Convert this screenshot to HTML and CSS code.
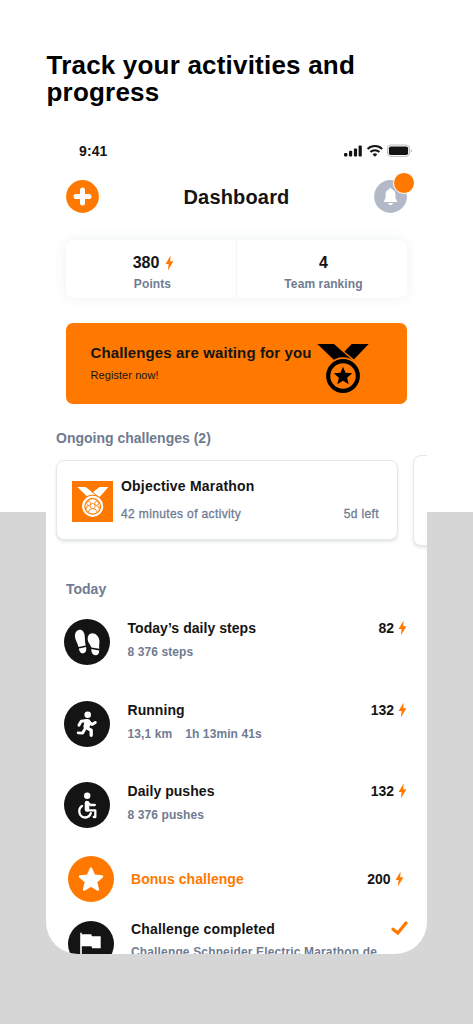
FILE: index.html
```html
<!DOCTYPE html>
<html lang="en">
<head>
<meta charset="utf-8">
<title>Dashboard</title>
<link rel="stylesheet" href="styles.css">
</head>
<body>
<svg class="defs" width="0" height="0">
  <symbol id="bolt" viewBox="0 0 9 16"><path d="M5.6 .5 .6 9.100h3L2.900 15.500 8.400 6.300H5.200z"/></symbol>
</svg>
<main class="phone">
  <h1 class="headline">Track your activities and progress</h1>
  <div class="status">
    <span class="time">9:41</span>
    <svg class="signals" width="70" height="14" viewBox="0 0 70 14">
      <g fill="#141414"><rect x="1" y="9" width="3.4" height="3.4" rx="1.2"/><rect x="6" y="6.8" width="3.2" height="5.6" rx="1"/><rect x="10.900" y="4.400" width="3.200" height="8" rx="1"/><rect x="15.600" y="1.600" width="3.200" height="10.800" rx="1"/></g>
      <g fill="none" stroke="#141414" stroke-width="2"><path d="M24.600 5a10.400 10.400 0 0 1 14.600 0M27.400 8a6.400 6.400 0 0 1 9 0"/></g>
      <path d="M31.900 12.800 29.600 10.400a3.300 3.300 0 0 1 4.600 0z" fill="#141414"/>
      <rect x="44.500" y="1" width="22" height="11.400" rx="3.200" fill="none" stroke="#bcbcbc"/>
      <rect x="45.900" y="2.400" width="19.200" height="8.600" rx="1.800" fill="#141414"/>
      <path d="M67.800 5v3.600q1.400-.5 1.400-1.800t-1.400-1.800" fill="#bcbcbc"/>
    </svg>
  </div>
  <header class="top">
    <svg width="33" height="33" viewBox="0 0 33 33"><circle cx="16.500" cy="16.500" r="16.400" fill="#ff7900"/><path d="M16.500 10v13M10 16.500h13" stroke="#fff" stroke-width="5" stroke-linecap="round"/></svg>
    <h2>Dashboard</h2>
    <div class="bell">
      <svg width="33" height="33" viewBox="0 0 33 33"><circle cx="16.500" cy="16.500" r="16.400" fill="#b2b9c8"/><path d="M16.500 8c.8 0 1.200.6 1.200 1.300 2.400.6 3.700 2.500 3.700 5v3.700l1.600 3v1H10v-1l1.600-3v-3.700c0-2.500 1.300-4.400 3.700-5 0-.7.4-1.300 1.200-1.300zM14 23h5c-.4 1.400-1.300 2-2.500 2s-2.100-.6-2.500-2z" fill="#fff"/></svg>
      <span class="dot"></span>
    </div>
  </header>
  <section class="stats">
    <div class="stat"><strong>380<svg class="bolt" width="9" height="16"><use href="#bolt"/></svg></strong><span>Points</span></div>
    <div class="stat"><strong>4</strong><span>Team ranking</span></div>
  </section>
  <section class="banner">
    <div class="banner-text"><strong>Challenges are waiting for you</strong><span>Register now!</span></div>
    <svg width="52" height="50" viewBox="0 0 156 150">
      <path d="M1 3h50l55 49H52z"/><path d="M104 3h51l-45 47-29-23z"/><path d="M80 25l32 27" stroke="#ff7900" stroke-width="3"/>
      <circle cx="78" cy="99" r="56" fill="#ff7900"/><circle cx="78" cy="99" r="44.500" fill="none" stroke="#000" stroke-width="12.500"/>
      <path d="M78 71l7.600 18.500 20 1.500-15.200 13 4.700 19.500L78 113l-17.100 10.500L65.600 104 50.400 91l20-1.500z"/>
    </svg>
  </section>
  <h3 class="section-title ongoing">Ongoing challenges (2)</h3>
  <section class="carousel">
    <article class="card">
      <svg width="41" height="41" viewBox="0 0 123 123">
        <path d="M0 0h123v123H0z" fill="#ff7900"/>
        <path d="M16 18h25l38 30H47z" fill="#fff"/><path d="M83 18h26L81 50 62 34z" fill="#fff"/><path d="M57 30l27 22" stroke="#ff7900" stroke-width="3"/>
        <circle cx="62" cy="76" r="35" fill="#ff7900"/><circle cx="62" cy="76" r="28.500" fill="none" stroke="#fff" stroke-width="6.500"/>
        <circle cx="62" cy="76" r="21.500" fill="#fff"/>
        <g fill="#fff" stroke="#ff7900" stroke-width="2.500"><circle cx="50" cy="67" r="6"/><circle cx="74" cy="67" r="6"/><path d="M42 86q0-12 9-12M82 86q0-12-9-12"/><circle cx="62" cy="75" r="7.500"/><path d="M49 93q1-10 13-10t13 10"/></g>
      </svg>
      <div class="card-text"><strong>Objective Marathon</strong><div class="meta"><span>42 minutes of activity</span><span>5d left</span></div></div>
    </article>
    <article class="card next"></article>
  </section>
  <h3 class="section-title today">Today</h3>
  <ul class="feed">
    <li class="row">
      <svg class="icon" width="46" height="46" viewBox="0 0 46 46"><circle cx="23" cy="23" r="23" fill="#141414"/><g fill="#fff"><path d="M15.300 10.800c3-.6 5 2.300 5.400 6 .3 3.300.2 6.500 1 9.600l-7.200 1.600c-.6-3.700-3.400-6.600-3.600-11-.1-3.300 1.700-5.700 4.400-6.200zM14.900 29.500l7.200-1.500c.6 3.400-.2 5.800-2.600 6.300-2.700.5-4.200-1.500-4.600-4.800z"/><path d="M28.200 14.200c-2.900 0-4.700 2.800-4.500 6.200.2 3 2.700 5.300 3.700 8l7.900 1.400c-.6-3 .4-5.300.1-8.400-.3-3.900-3.500-7.200-7.200-7.200zM27.300 30l7.900 1.500c.2 3.100-1.600 5.200-4.200 4.800-2.500-.4-3.900-2.900-3.700-6.300z"/></g></svg>
      <div class="row-text"><strong>Today’s daily steps</strong><span>8 376 steps</span></div>
      <b class="score">82<svg class="bolt" width="9" height="16"><use href="#bolt"/></svg></b>
    </li>
    <li class="row">
      <svg class="icon" width="46" height="46" viewBox="0 0 46 46"><circle cx="23" cy="23" r="23" fill="#141414"/><circle cx="23.700" cy="13.700" r="3.300" fill="#fff"/><path d="M20.500 18.500h5l2 3.500-3 6-5-2z" fill="#fff"/><g fill="none" stroke="#fff" stroke-width="2.900" stroke-linecap="round" stroke-linejoin="round"><path d="M14.900 24.300l2.300-4 6.300-.8 4.500 4 3.300-2"/><path d="M23.500 20.500l-2.300 5.500 6 3.300v5" stroke-width="3.300"/><path d="M20.600 28.500l-2 3.600-4.400-.2"/></g></svg>
      <div class="row-text"><strong>Running</strong><span class="pair"><span>13,1 km</span><span>1h 13min 41s</span></span></div>
      <b class="score">132<svg class="bolt" width="9" height="16"><use href="#bolt"/></svg></b>
    </li>
    <li class="row">
      <svg class="icon" width="46" height="46" viewBox="0 0 46 46"><circle cx="23" cy="23" r="23" fill="#141414"/><circle cx="23.200" cy="13.700" r="3.200" fill="#fff"/><g fill="none" stroke="#fff" stroke-width="2.300" stroke-linecap="round" stroke-linejoin="round"><path d="M23 21v6.500" stroke-width="4.600"/><path d="M24 21l2.500 2h4.300M23 28.300h8.300V35h-1.500M18 24a6.400 6.400 0 0 0 2 11.400c3.300.4 5.900-1.300 6.800-4.200"/></g></svg>
      <div class="row-text"><strong>Daily pushes</strong><span>8 376 pushes</span></div>
      <b class="score">132<svg class="bolt" width="9" height="16"><use href="#bolt"/></svg></b>
    </li>
    <li class="row bonus">
      <svg class="icon" width="46" height="46" viewBox="0 0 46 46"><circle cx="23" cy="23" r="23" fill="#ff7900"/><path d="M23 12.500l3.200 7.300 7.800.7-6 5.300 1.900 7.800-6.900-4.100-6.900 4.100 1.900-7.800-6-5.300 7.800-.7z" fill="#fff" stroke="#fff" stroke-width="2.400" stroke-linejoin="round"/></svg>
      <div class="row-text"><strong>Bonus challenge</strong></div>
      <b class="score">200<svg class="bolt" width="9" height="16"><use href="#bolt"/></svg></b>
    </li>
    <li class="row done">
      <svg class="icon" width="46" height="46" viewBox="0 0 46 46"><circle cx="23" cy="23" r="23" fill="#141414"/><path d="M12.200 12.500q0-.9.800-.9t.8.900v.8h9.400l.8 2h8.700V27.200h-8.500l-.8-2h-9.600V38h-1.600z" fill="#fff"/></svg>
      <div class="row-text"><strong>Challenge completed</strong><span>Challenge Schneider Electric Marathon de</span></div>
      <svg class="check" width="17" height="15" viewBox="0 0 17 15"><path d="M2 8.300l4.800 3.700L15 2" fill="none" stroke="#ff7900" stroke-width="3.200" stroke-linecap="round"/></svg>
    </li>
  </ul>
</main>
</body>
</html>
```
FILE: styles.css
```css
* { box-sizing: border-box; margin: 0; padding: 0; }
body {
  width: 473px; height: 1024px; overflow: hidden;
  background: linear-gradient(#fff 512px, #d6d6d6 512px);
  font-family: "Liberation Sans", Arial, sans-serif; color: #141414;
}
svg { display: block; flex: none; }
.defs { position: absolute; }
.phone {
  width: 381px; height: 954px; margin-left: 46px; padding-top: 52px;
  background: #fff; border-radius: 0 0 32px 32px; overflow: hidden;
}
.headline { height: 54px; padding-left: .5px; font-size: 26px; line-height: 27px; letter-spacing: .2px; color: #000; }
.status { display: flex; justify-content: space-between; align-items: center; height: 20px; margin: 35px 14px 0 33px; }
.time { font-size: 14px; font-weight: bold; letter-spacing: .1px; }
.top { display: flex; justify-content: space-between; align-items: center; height: 33px; margin: 19px 20px 0; }
.top h2 { font-size: 20px; line-height: 24px; letter-spacing: .17px; }
.bell { position: relative; }
.dot { position: absolute; top: -8.500px; right: -8px; width: 22px; height: 22px; border: 1.500px solid #fff; border-radius: 50%; background: #ff7900; }
.stats { display: flex; height: 58px; margin: 27px 20px 0; border-radius: 8px; background: #fff; box-shadow: 0 0 14px rgba(60, 95, 110, .09); }
.stat { flex: 1; display: flex; flex-direction: column; align-items: center; padding: 14px 0 0 3px; }
.stat + .stat { border-left: 1px solid #f4f6f7; }
.stat strong { display: flex; align-items: center; gap: 6px; font-size: 16px; line-height: 18px; }
.stat:first-child strong { padding-left: 2px; }
.stat span { margin-top: 5px; font-size: 12px; line-height: 14px; font-weight: bold; letter-spacing: .1px; color: #6f7b91; }
.bolt { fill: #ff7900; }
.banner { display: flex; height: 81px; margin: 25px 20px 0; padding: 20px 0 0 24.500px; border-radius: 7px; background: #ff7900; }
.banner-text { width: 226.500px; white-space: nowrap; }
.banner strong { display: block; font-size: 15px; line-height: 20px; letter-spacing: .12px; }
.banner span { display: block; margin-top: 4px; font-size: 11px; line-height: 16px; letter-spacing: .07px; }
.section-title { font-size: 14px; line-height: 18px; color: #6f7b91; }
.ongoing { margin: 25px 0 0 10px; }
.carousel { display: flex; align-items: center; gap: 15px; height: 90px; margin: 8px 0 0 10px; }
.card { flex: none; display: flex; gap: 8px; width: 342px; height: 80px; padding: 20px 18px 0 15px; border: 1px solid #e3e8eb; border-radius: 8px; background: #fff; box-shadow: 0 2px 3px rgba(50, 60, 70, .13); }
.next { height: 91px; }
.card-text { flex: 1; margin-top: -4px; }
.card-text strong { display: block; font-size: 14px; line-height: 18px; letter-spacing: .2px; }
.meta { display: flex; justify-content: space-between; margin-top: 11px; font-size: 12px; line-height: 16px; letter-spacing: .37px; color: #6f7b91; -webkit-text-stroke: .3px #6f7b91; }
.today { margin: 35px 0 0 20px; }
.feed { list-style: none; padding-top: 21px; }
.row { display: flex; align-items: flex-start; height: 81.500px; padding: 0 20px 0 18px; }
.row-text { flex: 1; margin-left: 17.500px; white-space: nowrap; }
.row-text strong { display: block; font-size: 14px; line-height: 18px; letter-spacing: .05px; }
.row-text > span { display: block; margin-top: 7px; font-size: 12px; line-height: 16px; font-weight: bold; letter-spacing: .1px; color: #6f7b91; }
.row-text > .pair { display: flex; gap: 13px; }
.score { display: flex; align-items: center; gap: 4px; font-size: 14px; line-height: 18px; }
.bonus { align-items: center; height: 46px; margin-top: -7.500px; padding: 0 23.500px 0 21.500px; color: #ff7900; }
.bonus .score { color: #141414; }
.done { height: 46px; margin-top: 19px; padding: 0 19.500px 0 21.500px; }
.done .row-text { margin-top: -1px; }
.done .row-text strong { letter-spacing: .17px; }
.done .row-text > span { margin-top: 6px; letter-spacing: .15px; }
```
